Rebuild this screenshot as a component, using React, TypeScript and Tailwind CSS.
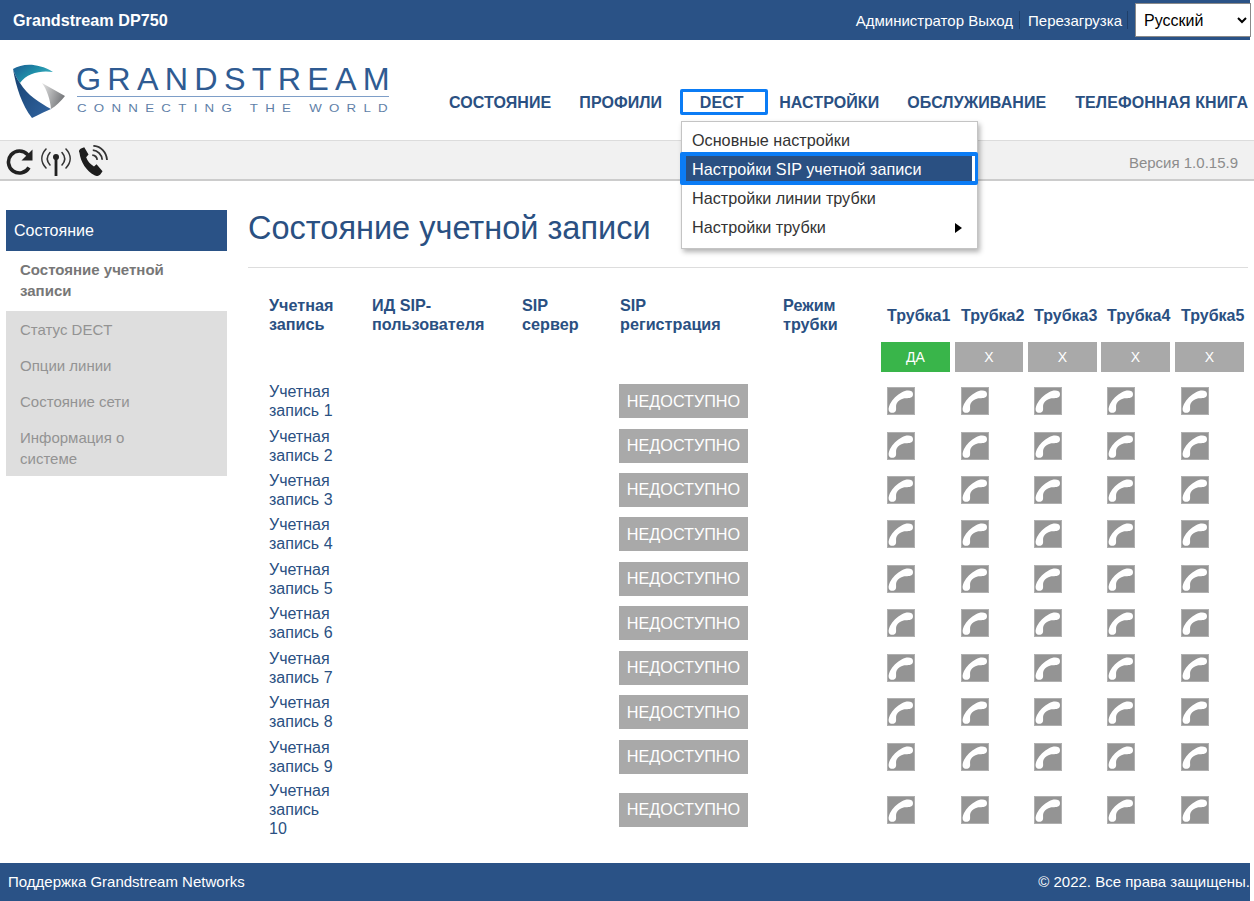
import React from "react";

const rowGrid = "grid grid-cols-[103px_150px_98px_163px_98px_74px_73px_73px_74px_74px]";
const accounts = [1, 2, 3, 4, 5, 6, 7, 8, 9, 10];
const handsets = [1, 2, 3, 4, 5];

function Handset() {
  return (
    <svg width="28" height="28" viewBox="0 0 28 28" className="block">
      <rect x="0.5" y="0.5" width="27" height="27" fill="#949494" stroke="#b0b0b0" />
      <path
        d="M25 4.5C22 2.8 18 3.6 15 5.2C10 7.8 5.5 12 3 17C1.4 20.2 1 23.5 2.6 25C4.8 26.6 8.2 26 9 23.2C9.5 20.8 8.4 18.6 9.8 16.2C11.2 13.8 13.6 12 16.5 11.4C19 10.9 24 11.9 25.7 9C26.3 7.4 26 5.6 25 4.5Z"
        fill="#ffffff"
      />
    </svg>
  );
}

function Logo() {
  return (
    <svg width="380" height="56" viewBox="0 0 380 56" className="block overflow-visible">
      <defs>
        <linearGradient id="swoosh" x1="0" y1="0" x2="1" y2="0.6">
          <stop offset="0" stopColor="#1c5a92" />
          <stop offset="0.55" stopColor="#1f8ea8" />
          <stop offset="1" stopColor="#3fb3c4" />
        </linearGradient>
        <linearGradient id="body" x1="0" y1="0" x2="0.9" y2="0.8">
          <stop offset="0" stopColor="#14406f" />
          <stop offset="1" stopColor="#2e5f99" />
        </linearGradient>
        <linearGradient id="wedge" x1="0" y1="0" x2="1" y2="0.4">
          <stop offset="0" stopColor="#e4e4e4" />
          <stop offset="1" stopColor="#77797c" />
        </linearGradient>
      </defs>
      <path d="M0 6C9 1 23 -1 40 9C28 7 14 10 7 20C4 16 1 10 0 6Z" fill="url(#swoosh)" />
      <path d="M0 6C3 24 9 42 19 55C27 51 33 48 38 46C27 40 14 32 7 20C4 16 1 10 0 6Z" fill="url(#body)" />
      <path d="M29 20L52 33C48 38 43 43 38 46C37 36 34 27 29 20Z" fill="url(#wedge)" />
      <text x="63" y="27" fontFamily="'Liberation Sans', sans-serif" fontSize="31" letterSpacing="6" fill="#2f5b92" textLength="320" lengthAdjust="spacingAndGlyphs">
        GRANDSTREAM
      </text>
      <rect x="64" y="33" width="312" height="1" fill="#7e9ec8" />
      <text x="64" y="49" fontFamily="'Liberation Sans', sans-serif" fontSize="11" letterSpacing="6" fill="#5f7fa8" textLength="318" lengthAdjust="spacingAndGlyphs">
        CONNECTING THE WORLD
      </text>
    </svg>
  );
}

function Toolbar() {
  return (
    <div className="flex items-center pl-[5px] h-[38px]">
      <svg width="29" height="28" viewBox="0 0 29 28" className="block mt-[1px]">
        <path d="M24 20.5A11 11 0 1 1 22.5 7.5L25 10" fill="none" stroke="#222" strokeWidth="3.6" />
        <path d="M27.5 2.5V13.5H16.5Z" fill="#222" />
      </svg>
      <svg width="32" height="30" viewBox="0 0 32 30" className="block ml-[6px] mt-[1px]">
        <g fill="none" stroke="#333" strokeWidth="1.6" strokeLinecap="round">
          <path d="M6 3C0.5 9 0.5 16 6 22" />
          <path d="M10 6.5C6.5 10.5 6.5 15 10 19" />
          <path d="M26 3C31.5 9 31.5 16 26 22" />
          <path d="M22 6.5C25.5 10.5 25.5 15 22 19" />
        </g>
        <circle cx="16" cy="11" r="3" fill="#222" />
        <rect x="14.6" y="12" width="2.8" height="18" fill="#222" />
      </svg>
      <svg width="32" height="31" viewBox="0 0 29.5 29" className="block ml-[4px]">
        <path
          d="M3 7C2 5.5 3 4 4.5 3.2L7.5 2L11.5 9L9.3 11.5C10.5 15 13 18 16.6 20L19 18L24.6 24.5L22.5 27.5C21 29 19.5 29.5 17.5 28.5C9.5 24.5 4 16 3 7Z"
          fill="#1e1e1e"
        />
        <g fill="none" stroke="#333" strokeWidth="1.7">
          <path d="M15 9.5C17.5 9.7 19.3 11.5 19.6 14" />
          <path d="M15.5 4.8C20 5 24 9 24.3 13.8" />
          <path d="M16 0.8C23 1 28.3 7 28.8 14" />
        </g>
      </svg>
    </div>
  );
}

export default function App() {
  return (
    <div className="flex flex-col min-h-[901px] w-[1254px] overflow-hidden bg-white text-[16.2px] text-[#2a5082] font-['Liberation_Sans',Arial,sans-serif] relative">
      <header className="h-10 shrink-0 flex items-start">
        <div className="w-[1250px] h-10 bg-[#2a5286] flex items-start text-white">
          <div className="pl-[13px] leading-10 font-bold text-[16.2px]">Grandstream DP750</div>
          <div className="ml-auto flex items-start h-10">
            <span className="leading-[41px] text-[15px]">Администратор Выход</span>
            <span className="w-px h-[18px] bg-[#1f3f69] mt-[11px] ml-[6px] mr-[8px]" />
            <span className="leading-[41px] text-[15px]">Перезагрузка</span>
            <span className="w-px h-[18px] bg-[#1f3f69] mt-[11px] ml-[5px] mr-[7px]" />
            <select
              defaultValue="ru"
              className="w-[116px] h-[34px] mt-[3px] -mr-px bg-white text-[16px] text-black border border-[#8a8a8a] pl-[4px] relative"
            >
              <option value="ru">Русский</option>
            </select>
          </div>
        </div>
      </header>

      <div className="h-[100px] shrink-0 flex items-start border-b border-[#dcdcdc] box-content">
        <div className="ml-[13px] mt-[23px] w-[378px]">
          <Logo />
        </div>
        <nav className="ml-[58px] mt-[49px] flex items-center h-[26px] font-bold whitespace-nowrap text-[16px] tracking-[0.08px]">
          <span className="mt-[2px]">СОСТОЯНИЕ</span>
          <span className="ml-[28px] mt-[2px]">ПРОФИЛИ</span>
          <span className="ml-[18px] w-[88px] h-[26px] border-[3px] border-[#0b7cf5] rounded-[2px] flex items-center justify-center pr-[5px] pt-[2px]">
            DECT
          </span>
          <span className="ml-[11px] mt-[2px]">НАСТРОЙКИ</span>
          <span className="ml-[28px] mt-[2px]">ОБСЛУЖИВАНИЕ</span>
          <span className="ml-[29px] mt-[2px]">ТЕЛЕФОННАЯ КНИГА</span>
        </nav>
      </div>

      <div className="h-[38px] shrink-0 bg-[#f1f1f1] border-b-2 border-[#cccccc] box-content flex items-start">
        <Toolbar />
        <span className="ml-auto mr-[16px] mt-[14px] text-[15px] leading-4 text-[#8c8c8c]">Версия 1.0.15.9</span>
      </div>

      <div className="absolute left-[681px] top-[121px] w-[297px] h-[128px] bg-white border border-[#c4c4c4] shadow-[2px_3px_5px_rgba(0,0,0,0.3)] text-[#333333] z-10 pt-[4px]">
        <div className="h-[29px] leading-[29px] pl-[10px]">Основные настройки</div>
        <div className="h-[33px] -ml-[2px] -mr-px -mt-[3px] -mb-px relative border-y-4 border-l-[6px] border-r-[3px] border-[#0b7cf5] rounded-[2px] bg-white">
          <div className="h-[25px] mr-[3px] bg-[#2a5082] text-white leading-[27px] pl-[6px] whitespace-nowrap">Настройки SIP учетной записи</div>
        </div>
        <div className="h-[29px] leading-[29px] pl-[10px]">Настройки линии трубки</div>
        <div className="h-[29px] leading-[29px] pl-[10px] flex items-center justify-between pr-[15px]">
          <span>Настройки трубки</span>
          <span className="w-0 h-0 border-y-[5px] border-y-transparent border-l-[7px] border-l-black" />
        </div>
      </div>

      <main className="flex-1 flex items-start">
        <aside className="ml-[6px] mt-[29px] w-[221px] shrink-0 text-[15px] leading-[21px]">
          <div className="h-[41px] bg-[#2a5286] text-white text-[16px] leading-[41px] pl-[8px]">Состояние</div>
          <div className="h-[60px] pt-[8px] pl-[14px] pr-[40px] font-bold text-[15px] text-[#777777]">Состояние учетной записи</div>
          <div className="bg-[#dedede] h-[165px] text-[#939393] pl-[14px] pr-[60px]">
            <div className="py-[7.5px]">Статус DECT</div>
            <div className="py-[7.5px]">Опции линии</div>
            <div className="py-[7.5px]">Состояние сети</div>
            <div className="py-[7.5px]">Информация о системе</div>
          </div>
        </aside>

        <section className="ml-[21px] w-[1000px] shrink-0">
          <h1 className="pt-[28px] pb-[20px] text-[32.5px] leading-[38px] font-normal border-b border-[#dddddd] h-[87px]">
            Состояние учетной записи
          </h1>
          <div className="pl-[21px] pt-[28px]">
            <div className={rowGrid + " h-[46px] font-bold leading-[19px]"}>
              <div className="w-[70px]">Учетная запись</div>
              <div>ИД SIP-пользователя</div>
              <div className="w-[70px]">SIP сервер</div>
              <div className="w-[110px]">SIP регистрация</div>
              <div className="w-[70px]">Режим трубки</div>
              {handsets.map((h) => (
                <div key={h} className="pl-[6px] pt-[10px] text-[16px]">
                  Трубка{h}
                </div>
              ))}
            </div>
            <div className={rowGrid + " h-[30px] mb-[6.85px]"}>
              <div className="col-start-6 w-[69px] bg-[#39b54a] text-white text-[14px] flex items-center justify-center">ДА</div>
              <div className="w-[68px] bg-[#a9a9a9] text-white text-[14px] flex items-center justify-center">X</div>
              {handsets.slice(2).map((h) => (
                <div key={h} className="w-[69px] bg-[#a9a9a9] text-white text-[14px] flex items-center justify-center">
                  X
                </div>
              ))}
            </div>
            {accounts.map((a) => (
              <div key={a} className={rowGrid + (a === 10 ? " h-[62px] items-center leading-[19px]" : " h-[44.45px] items-center leading-[19px]")}>
                <div className="w-[68px] text-[16px]">Учетная запись {a}</div>
                <div />
                <div />
                <div className="-ml-px w-[129px] h-[34px] bg-[#a9a9a9] text-white flex items-center justify-center">НЕДОСТУПНО</div>
                <div />
                {handsets.map((h) => (
                  <div key={h} className="pl-[6px]">
                    <Handset />
                  </div>
                ))}
              </div>
            ))}
          </div>
        </section>
      </main>

      <footer className="h-[38px] w-[1250px] shrink-0 bg-[#2a5286] text-white text-[15px] flex items-center justify-between pl-[8px]">
        <span>Поддержка Grandstream Networks</span>
        <span>© 2022. Все права защищены.</span>
      </footer>
    </div>
  );
}
